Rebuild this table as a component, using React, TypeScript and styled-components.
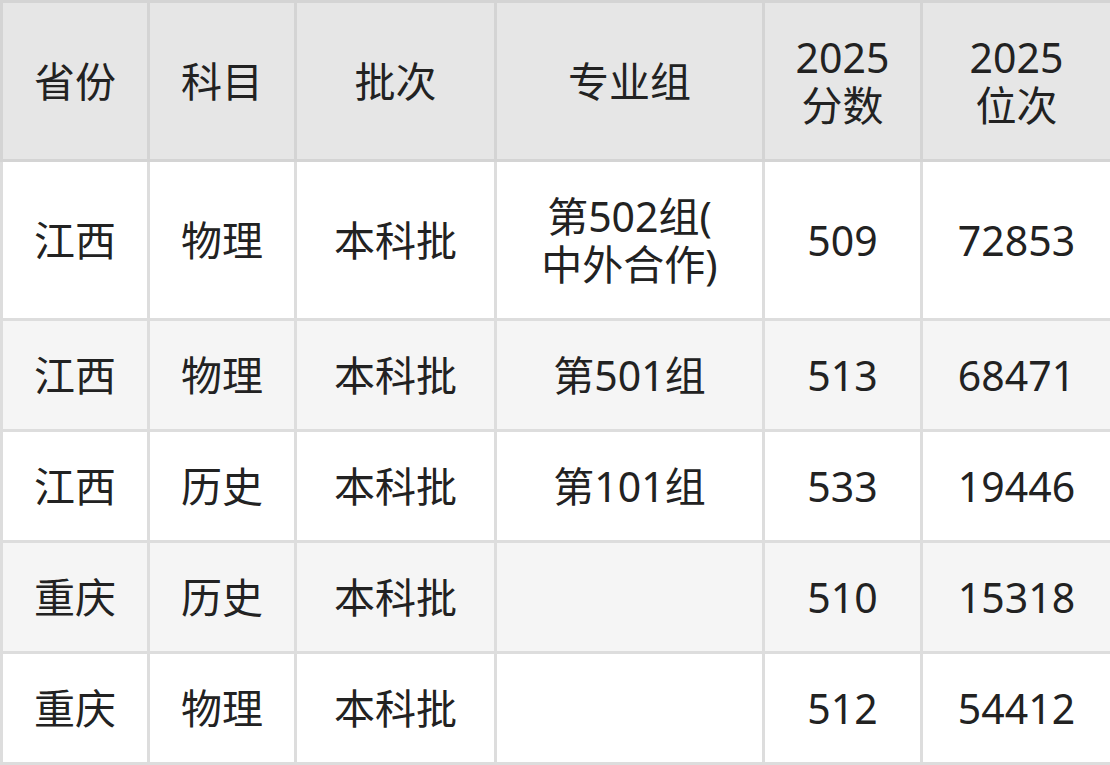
import React from "react";
import styled, { createGlobalStyle } from "styled-components";

const GlobalStyle = createGlobalStyle`
  html, body {
    margin: 0;
    padding: 0;
    background: #ffffff;
  }
  body {
    font-family: "Noto Sans", "Noto Sans CJK SC", sans-serif;
  }
`;

const Table = styled.table`
  width: 1110px;
  border-collapse: collapse;
  table-layout: fixed;
  font-family: "Noto Sans", "Noto Sans CJK SC", sans-serif;
  font-size: 41px;
  line-height: 48px;
  color: #222222;
  border: 3px solid #d9d9d9;
`;

const HeadCell = styled.th`
  background: #e6e6e6;
  border: 3px solid #d4d4d4;
  padding: 30px 4px;
  font-weight: 400;
  text-align: center;
  vertical-align: middle;
`;

const Row = styled.tr<{ $striped: boolean }>`
  background: ${(p) => (p.$striped ? "#f5f5f5" : "#ffffff")};
`;

const Cell = styled.td`
  border: 3px solid #dddddd;
  padding: 30px 4px;
  text-align: center;
  vertical-align: middle;
`;

const widths = [147, 147, 200, 268, 158, 190];

type RowData = {
  prov: string;
  subj: string;
  batch: string;
  group: React.ReactNode;
  score: string;
  rank: string;
};

const rows: RowData[] = [
  {
    prov: "江西",
    subj: "物理",
    batch: "本科批",
    group: (
      <>
        第502组(
        <br />
        中外合作)
      </>
    ),
    score: "509",
    rank: "72853",
  },
  { prov: "江西", subj: "物理", batch: "本科批", group: "第501组", score: "513", rank: "68471" },
  { prov: "江西", subj: "历史", batch: "本科批", group: "第101组", score: "533", rank: "19446" },
  { prov: "重庆", subj: "历史", batch: "本科批", group: "", score: "510", rank: "15318" },
  { prov: "重庆", subj: "物理", batch: "本科批", group: "", score: "512", rank: "54412" },
];

export default function App() {
  return (
    <>
      <GlobalStyle />
      <Table>
        <colgroup>
          {widths.map((w, i) => (
            <col key={i} style={{ width: w }} />
          ))}
        </colgroup>
        <thead>
          <tr>
            <HeadCell>省份</HeadCell>
            <HeadCell>科目</HeadCell>
            <HeadCell>批次</HeadCell>
            <HeadCell>专业组</HeadCell>
            <HeadCell>
              2025
              <br />
              分数
            </HeadCell>
            <HeadCell>
              2025
              <br />
              位次
            </HeadCell>
          </tr>
        </thead>
        <tbody>
          {rows.map((r, i) => (
            <Row key={i} $striped={i % 2 === 1}>
              <Cell>{r.prov}</Cell>
              <Cell>{r.subj}</Cell>
              <Cell>{r.batch}</Cell>
              <Cell>{r.group}</Cell>
              <Cell>{r.score}</Cell>
              <Cell>{r.rank}</Cell>
            </Row>
          ))}
        </tbody>
      </Table>
    </>
  );
}
